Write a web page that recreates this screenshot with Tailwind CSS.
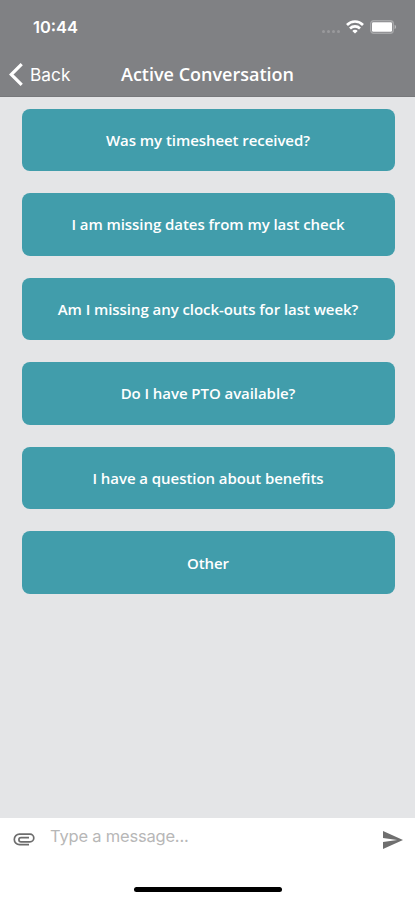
<!DOCTYPE html>
<html lang="en">
<head>
    <meta charset="UTF-8">
    <meta name="viewport" content="width=device-width, initial-scale=1.0">
    <title>Active Conversation</title>
    <script src="https://cdn.jsdelivr.net/npm/@tailwindcss/browser@4"></script>
</head>
<body class="h-[900px] overflow-hidden flex flex-col bg-[#e4e5e7] font-['Open_Sans',sans-serif]">

<header class="h-[97px] shrink-0 bg-[#808184] border-b border-[#77787b] text-white">
    <!-- Status bar -->
    <div class="h-[54px] flex items-center justify-between pl-[33px] pr-[18px]">
        <span class="font-['Inter',sans-serif] font-semibold text-[16.5px] leading-none">10:44</span>
        <div class="flex items-center">
            <div class="flex gap-[2px] mt-[9px] mr-[6px]">
                <span class="size-[3px] rounded-full bg-white/20"></span>
                <span class="size-[3px] rounded-full bg-white/20"></span>
                <span class="size-[3px] rounded-full bg-white/20"></span>
                <span class="size-[3px] rounded-full bg-white/20"></span>
            </div>
            <svg class="w-[18px] h-[14px] mr-[6px]" viewBox="0 0 18 14" fill="none" stroke="#fff" stroke-width="2.6">
                <path d="M1 5a11 11 0 0 1 16 0"/>
                <path d="M4 8.5a7 7 0 0 1 10 0"/>
                <path d="M9 13.6 6.3 10.9a3.7 3.7 0 0 1 5.4 0z" fill="#fff" stroke="none"/>
            </svg>
            <svg class="w-[27px] h-[14px]" viewBox="0 0 27 14">
                <rect x=".7" y=".7" width="22.6" height="12.6" rx="3" fill="none" stroke="#fff" stroke-opacity=".3" stroke-width="1.4"/>
                <rect x="2" y="2.3" width="20" height="9.4" rx="1.2" fill="#fff"/>
                <path d="M24.6 4.8c1.9.7 1.9 3.7 0 4.4z" fill="#fff" fill-opacity=".45"/>
            </svg>
        </div>
    </div>
    <!-- Navigation -->
    <div class="h-[41px] relative flex items-center justify-center">
        <button class="absolute left-[9px] top-[9px] flex items-center gap-[6px]">
            <svg class="w-[15px] h-[23px]" viewBox="0 0 15 23" fill="none" stroke="#fff" stroke-width="3.2">
                <path d="M12.7 1.2 2.2 11.5l10.5 10.3"/>
            </svg>
            <span class="font-['Inter',sans-serif] text-[17.3px] leading-none">Back</span>
        </button>
        <h1 class="pb-[2px] font-semibold text-[18px] leading-none">Active Conversation</h1>
    </div>
</header>

<main class="grow flex flex-col gap-[22px] pt-[11.5px] pl-[21.5px] pr-[20.5px] text-white font-semibold text-[15px] tracking-[-0.06px]">
    <button class="h-[62.6px] rounded-[8px] bg-[#419dab]">Was my timesheet received?</button>
    <button class="h-[62.6px] rounded-[8px] bg-[#419dab]">I am missing dates from my last check</button>
    <button class="h-[62.6px] rounded-[8px] bg-[#419dab]">Am I missing any clock-outs for last week?</button>
    <button class="h-[62.6px] rounded-[8px] bg-[#419dab]">Do I have PTO available?</button>
    <button class="h-[62.6px] rounded-[8px] bg-[#419dab]">I have a question about benefits</button>
    <button class="h-[62.6px] rounded-[8px] bg-[#419dab]">Other</button>
</main>

<footer class="h-[82px] shrink-0 bg-white flex flex-col">
    <div class="h-[42px] flex items-center pl-[13px] pr-[12px]">
        <svg class="w-[22px] h-[13px] mr-[15px]" viewBox="0 0 22 13" fill="none" stroke="#6d6d6d" stroke-width="1.7">
            <path d="M16 11.6H6.5a5.1 5.1 0 0 1 0-10.4H17a3.8 3.8 0 0 1 0 7.6H8a2.1 2.1 0 0 1 0-4.2h8"/>
        </svg>
        <span class="grow -mt-[6px] font-['Inter',sans-serif] text-[16.5px] leading-none tracking-[-0.2px] text-[#b7b7b7]">Type a message...</span>
        <svg class="w-[20px] h-[18px] mt-[1px]" viewBox="2 3 21 18" preserveAspectRatio="none" fill="#6f6f6f">
            <path d="M2.01 21 23 12 2.01 3 2 10l15 2-15 2z"/>
        </svg>
    </div>
    <!-- Home indicator -->
    <div class="w-[148px] h-[5px] mt-[27px] mx-auto rounded-full bg-black"></div>
</footer>

</body>
</html>
